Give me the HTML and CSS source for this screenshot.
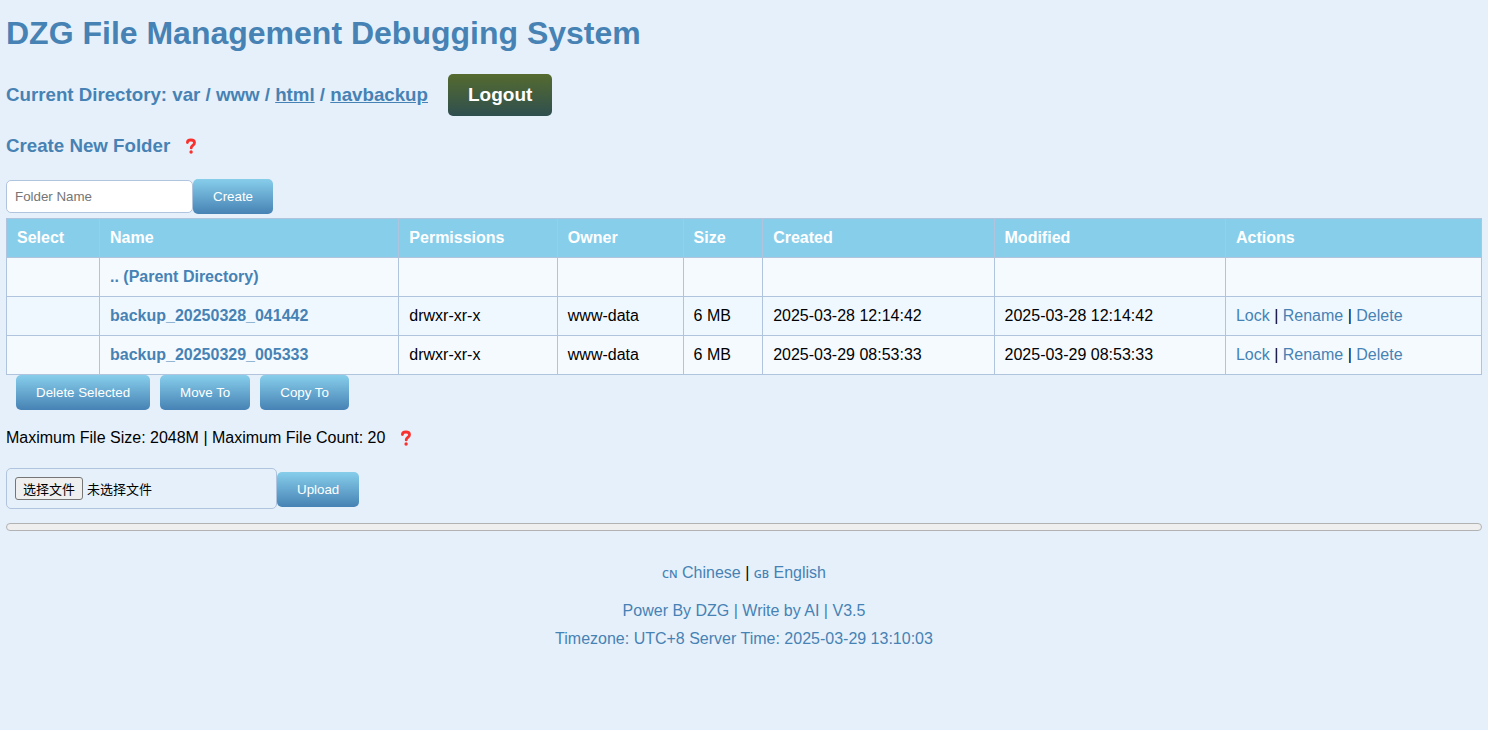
FILE: index.html
```html
<!DOCTYPE html>
<html lang="en">
<head>
<meta charset="utf-8">
<title>DZG File Management Debugging System</title>
<link rel="stylesheet" href="styles.css">
</head>
<body class="page">
<svg class="defs" width="0" height="0" aria-hidden="true">
  <symbol id="question" viewBox="0 0 11 16">
    <path d="M2.4 4.6C2.4 2.8 3.9 2 5.9 2s3.6 1 3.6 2.8c0 2.5-3.3 2.6-3.3 5.1" fill="none" stroke="#f8312f" stroke-width="2.8" stroke-linecap="round"/>
    <circle cx="6.1" cy="14" r="1.7" fill="#f8312f"/>
  </symbol>
</svg>
<header>
  <h1 class="title">DZG File Management Debugging System</h1>
  <div class="location">
    <h3 class="heading">Current Directory: var / www / <a href="#html">html</a> / <a href="#navbackup">navbackup</a></h3>
    <button type="button" class="button logout">Logout</button>
  </div>
</header>
<main>
  <section class="create">
    <div class="help-line">
      <h3 class="heading">Create New Folder</h3>
      <svg class="help" role="img" aria-label="Help"><use href="#question"/></svg>
    </div>
    <form class="form-row">
      <input class="field" type="text" placeholder="Folder Name" aria-label="Folder Name">
      <button type="button" class="button">Create</button>
    </form>
  </section>
  <table class="files">
    <thead>
      <tr><th>Select</th><th>Name</th><th>Permissions</th><th>Owner</th><th>Size</th><th>Created</th><th>Modified</th><th>Actions</th></tr>
    </thead>
    <tbody>
      <tr><td></td><td><a class="name" href="#parent">.. (Parent Directory)</a></td><td></td><td></td><td></td><td></td><td></td><td></td></tr>
      <tr><td></td><td><a class="name" href="#a">backup_20250328_041442</a></td><td>drwxr-xr-x</td><td>www-data</td><td>6 MB</td><td>2025-03-28 12:14:42</td><td>2025-03-28 12:14:42</td><td><a href="#lock">Lock</a> | <a href="#rename">Rename</a> | <a href="#delete">Delete</a></td></tr>
      <tr><td></td><td><a class="name" href="#b">backup_20250329_005333</a></td><td>drwxr-xr-x</td><td>www-data</td><td>6 MB</td><td>2025-03-29 08:53:33</td><td>2025-03-29 08:53:33</td><td><a href="#lock">Lock</a> | <a href="#rename">Rename</a> | <a href="#delete">Delete</a></td></tr>
    </tbody>
  </table>
  <div class="bulk">
    <button type="button" class="button">Delete Selected</button>
    <button type="button" class="button">Move To</button>
    <button type="button" class="button">Copy To</button>
  </div>
  <div class="help-line limits">
    <span>Maximum File Size: 2048M | Maximum File Count: 20</span>
    <svg class="help" role="img" aria-label="Help"><use href="#question"/></svg>
  </div>
  <form class="form-row upload">
    <label class="picker" lang="zh-CN">
      <input class="picker-input" type="file">
      <span class="picker-button">选择文件</span>
      <span>未选择文件</span>
    </label>
    <button type="button" class="button">Upload</button>
  </form>
  <div class="progress" role="progressbar" aria-label="Upload progress"></div>
</main>
<footer class="footer">
  <div class="languages"><a href="#zh"><span class="flag">CN</span> Chinese</a> | <a href="#en"><span class="flag">GB</span> English</a></div>
  <div class="credit">Power By DZG | Write by AI | V3.5</div>
  <div class="credit">Timezone: UTC+8 Server Time: 2025-03-29 13:10:03</div>
</footer>
</body>
</html>
```
FILE: styles.css
```css
* { box-sizing: border-box; }
.page {
  margin: 0;
  padding: 14px 6px;
  background: #e6f0fa;
  color: #000;
  font: 16px/18px "Liberation Sans", Arial, sans-serif;
}
.defs { position: absolute; }
a { color: #4682b4; text-decoration: none; }
.title { margin: 0; color: #4682b4; font-size: 32px; line-height: 38px; }
.heading { margin: 0; color: #4682b4; line-height: 22px; }
.heading a { text-decoration: underline; }
.location { display: flex; align-items: center; gap: 20px; margin-top: 22px; }
.button {
  border: 0;
  border-radius: 5px;
  padding: 10px 20px;
  background: linear-gradient(#87ceeb, #4682b4);
  color: #fff;
  font-family: "Liberation Sans", Arial, sans-serif;
  line-height: 15px;
  cursor: pointer;
}
.logout {
  background: linear-gradient(#556b2f, #2f4f4f);
  font-size: 19px;
  line-height: 22px;
  font-weight: bold;
}
.help-line { display: flex; align-items: center; gap: 15px; }
.help { width: 11px; height: 16px; }
.create { margin-top: 19px; }
.create .form-row { margin-top: 22px; }
.form-row { display: flex; align-items: center; }
.field {
  width: 187px;
  height: 33px;
  padding: 8px;
  border: 1px solid #b0c4de;
  border-radius: 5px;
  background: #fff;
  font-family: "Liberation Sans", Arial, sans-serif;
}
.field::placeholder { color: #757575; }
.files { width: 100%; margin-top: 4px; border-collapse: collapse; background: #f5faff; }
.files th, .files td { height: 39px; padding: 10px; border: 1px solid #b0c4de; text-align: left; }
.files th { background: #87ceeb; color: #fff; }
.files tbody tr:nth-child(even) { background: #f0f8ff; }
.name { font-weight: bold; }
.bulk { display: flex; gap: 10px; padding-left: 10px; }
.limits { margin: 19px 0 21px; }
.upload { align-items: flex-end; }
.upload .button { margin-bottom: 2px; }
.picker {
  position: relative;
  display: flex;
  align-items: center;
  gap: 4px;
  width: 271px;
  padding: 8px;
  border: 1px solid #b0c4de;
  border-radius: 5px;
  font: 13px/19px "Noto Sans CJK SC", sans-serif;
}
.picker-input { position: absolute; inset: 0; width: 100%; opacity: 0; }
.picker-button { padding: 1px 7px; border: 1px solid #767676; border-radius: 3px; background: #efefef; }
.progress { height: 8px; margin-top: 14px; border: 1px solid #b2b2b2; border-radius: 4px; background: #efefef; }
.footer { margin-top: 33px; text-align: center; }
.languages { margin-bottom: 15px; }
.flag { font: 600 11px "Open Sans", sans-serif; }
.credit { color: #4682b4; line-height: 28px; }
```
